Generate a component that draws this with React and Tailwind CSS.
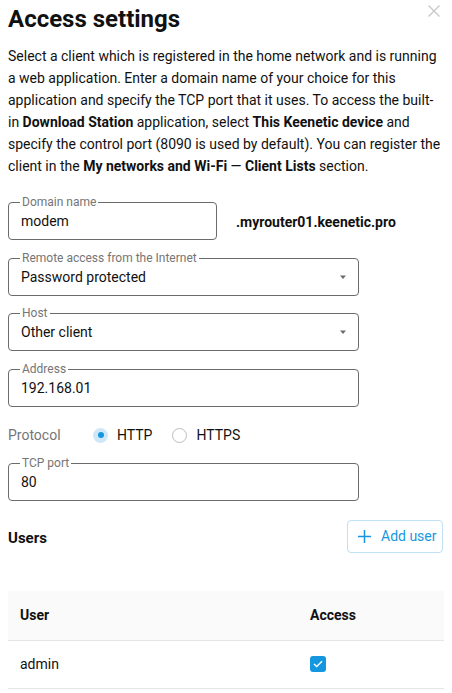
import React from 'react';

const font = { fontFamily: 'Roboto, "Noto Sans", sans-serif' };

// outlined field with the label sitting in the border
const Field = ({ label, value, select, className = '' }) => (
  <fieldset className={`border border-[#6b6b6b] rounded-[4px] pl-[12px] pr-[12px] pt-[2px] pb-[7px] ${className}`}>
    <legend className="px-[2px] -ml-[1px] text-[12px] leading-[12px] text-[#757575]">{label}</legend>
    <div className="flex items-center h-[22px] justify-between">
      <span className="text-[14px] text-[#111]">{value}</span>
      {select && (
        <svg width="8" height="5" viewBox="0 0 8 5" className="mr-[-1px]">
          <path d="M1 0.5h6L4 4z" fill="#6b6b6b" />
        </svg>
      )}
    </div>
  </fieldset>
);

const Radio = ({ checked, label }) => (
  <label className="flex items-center gap-[9px]">
    {checked ? (
      <span className="w-[15px] h-[15px] rounded-full bg-[#cfe8f8] flex items-center justify-center">
        <span className="w-[6px] h-[6px] rounded-full bg-[#1597e0]" />
      </span>
    ) : (
      <span className="w-[15px] h-[15px] rounded-full border border-[#bdbdbd] bg-white" />
    )}
    <span className="text-[14px] text-[#111]">{label}</span>
  </label>
);

export default function App() {
  return (
    <div className="relative w-[452px] h-[693px] bg-white overflow-hidden px-2" style={font}>
      {/* close */}
      <button className="absolute top-[5px] right-[12px] w-[12px] h-[12px]">
        <svg width="12" height="12" viewBox="0 0 12 12">
          <path d="M0.5 0.5l11 11M11.5 0.5l-11 11" stroke="#c7c7c7" strokeWidth="1.3" />
        </svg>
      </button>

      <h1 className="pt-[3px] text-[24px] leading-8 font-bold text-[#111]">Access settings</h1>

      <p className="mt-[10px] text-[14px] leading-[22px] text-[#111]">
        Select a client which is registered in the home network and is running a web application. Enter a domain name of your choice for this application and specify the TCP port that it uses. To access the built-in <b>Download Station</b> application, select <b>This Keenetic device</b> and specify the control port (8090 is used by default). You can register the client in the <b>My networks and Wi-Fi</b> — <b>Client Lists</b> section.
      </p>

      {/* domain */}
      <div className="mt-[19px] flex items-end">
        <Field label="Domain name" value="modem" className="w-[209px]" />
        <span className="ml-[19px] mb-[8px] text-[14px] leading-5 font-bold text-[#111]">.myrouter01.keenetic.pro</span>
      </div>

      <Field label="Remote access from the Internet" value="Password protected" select className="mt-3 w-[351px]" />
      <Field label="Host" value="Other client" select className="mt-[11px] w-[351px]" />
      <Field label="Address" value="192.168.01" className="mt-3 w-[351px]" />

      {/* protocol */}
      <div className="mt-4 h-6 flex items-center">
        <span className="w-[85px] text-[14px] text-[#757575]">Protocol</span>
        <div className="flex items-center gap-[20px]">
          <Radio checked label="HTTP" />
          <Radio label="HTTPS" />
        </div>
      </div>

      <Field label="TCP port" value="80" className="mt-[10px] w-[351px]" />

      {/* users */}
      <div className="mt-[19px] flex items-center justify-between">
        <h3 className="mt-[4px] text-[15px] font-bold text-[#111]">Users</h3>
        <button className="mr-px h-[33px] w-[96px] flex items-center gap-[9px] pl-[9px] border border-[#bfe0f5] rounded-[4px] text-[14px] text-[#1597e0]">
          <svg width="15" height="15" viewBox="0 0 16 16">
            <path d="M8 1v14M1 8h14" stroke="#1597e0" strokeWidth="1.6" />
          </svg>
          Add user
        </button>
      </div>

      <table className="mt-[38px] w-[436px] text-[14px] text-[#111] border-collapse">
        <thead>
          <tr className="bg-[#fafafa] border-b border-[#e6e6e6] h-[49px]">
            <th className="text-left font-bold pl-3 w-[302px]">User</th>
            <th className="text-left font-bold">Access</th>
          </tr>
        </thead>
        <tbody>
          <tr className="border-b border-[#e6e6e6] h-[48px]">
            <td className="pl-3">admin</td>
            <td>
              <span className="w-[16px] h-[16px] rounded-[3px] bg-[#1597e0] flex items-center justify-center">
                <svg width="10" height="8" viewBox="0 0 10 8">
                  <path d="M1 4l2.7 2.6L9 1.3" stroke="white" strokeWidth="1.4" fill="none" />
                </svg>
              </span>
            </td>
          </tr>
        </tbody>
      </table>
    </div>
  );
}
